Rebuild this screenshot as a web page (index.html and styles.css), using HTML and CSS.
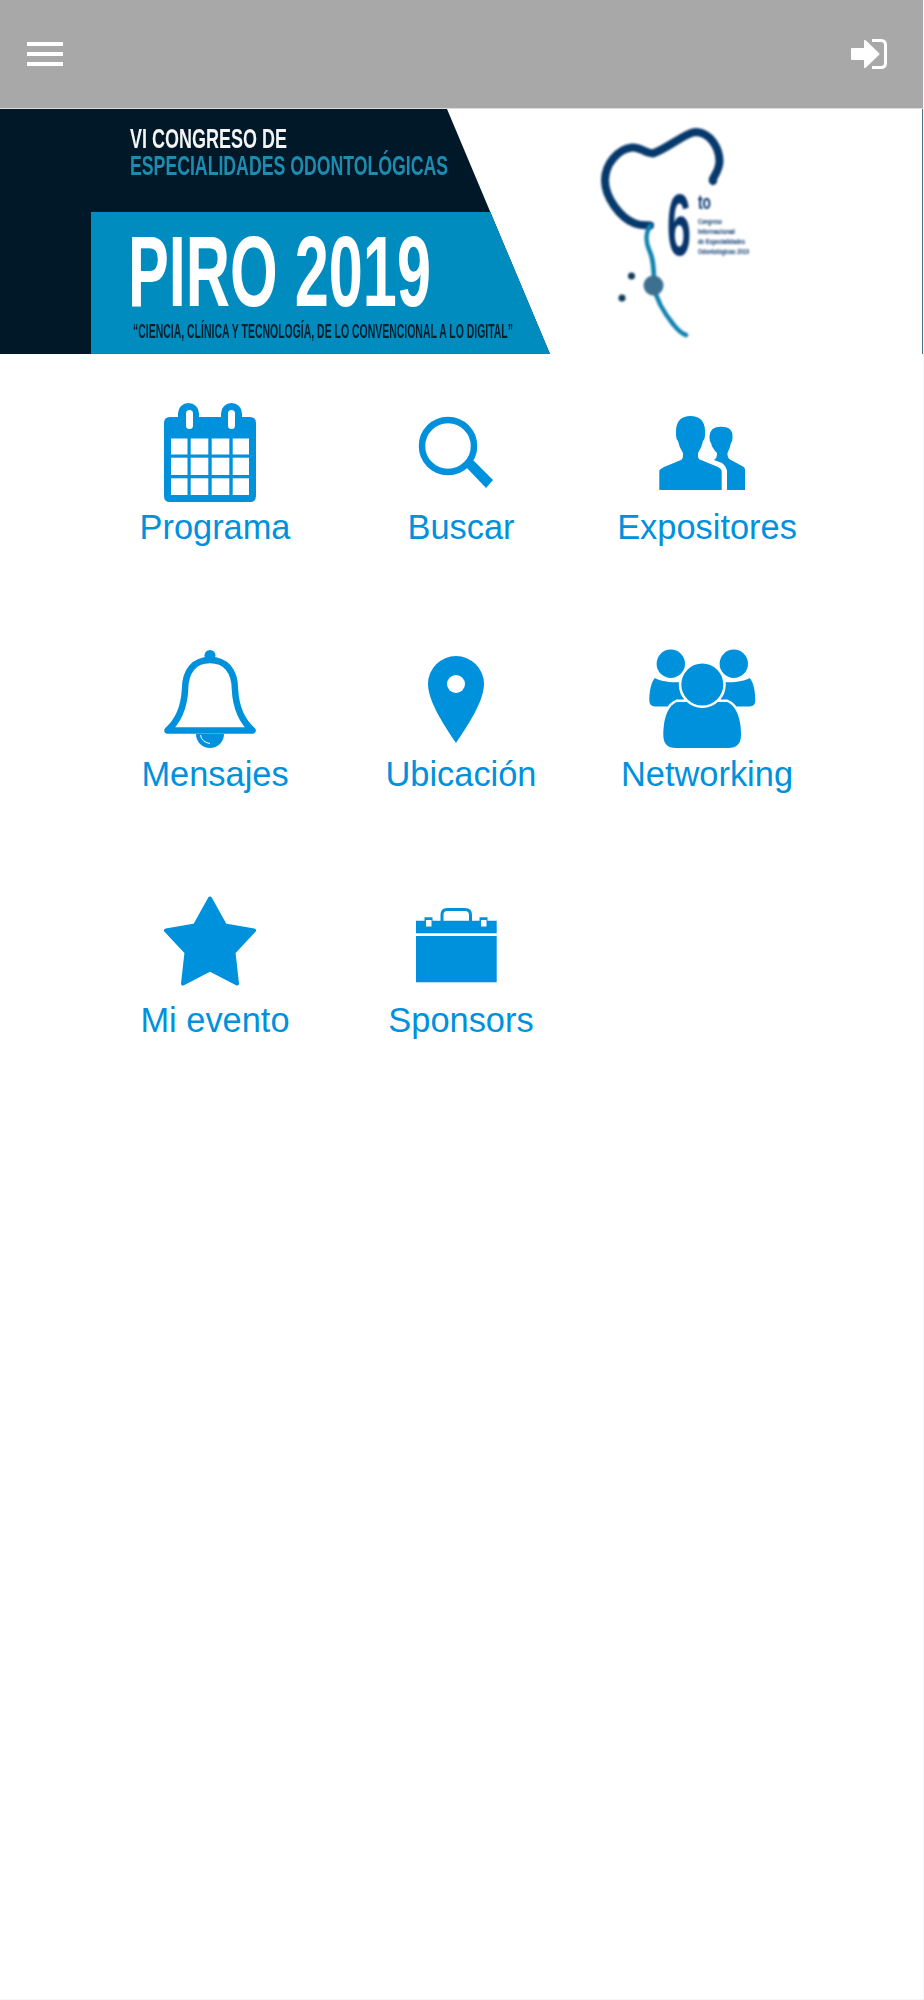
FILE: index.html
```html
<!DOCTYPE html>
<html lang="es">
<head>
<meta charset="UTF-8">
<meta name="viewport" content="width=device-width, initial-scale=1.0">
<title>PIRO 2019</title>
<link rel="stylesheet" href="styles.css">
</head>
<body>
<div class="app">
    <header class="topbar">
        <div class="burger"><span></span><span></span><span></span></div>
        <svg class="login" viewBox="0 0 36 30">
            <polygon class="login-arrow" points="1,10 14,10 14,2 27.5,15 14,28 14,20 1,20"/>
            <path class="login-door" d="M21 1.5H30Q34.5 1.5 34.5 6V24Q34.5 28.5 30 28.5H21"/>
        </svg>
    </header>

    <svg class="banner" viewBox="0 0 922 245">
        <rect class="b-white" width="922" height="245"/>
        <polygon class="b-dark" points="0,0 447,0 550,245 0,245"/>
        <polygon class="b-blue" points="91,103 490.300,103 550,245 91,245"/>
        <g class="b-soft">
            <text class="b-head" x="130" y="39" textLength="157" lengthAdjust="spacingAndGlyphs">VI CONGRESO DE</text>
            <text class="b-sub" x="130" y="66" textLength="318" lengthAdjust="spacingAndGlyphs">ESPECIALIDADES ODONTOLÓGICAS</text>
            <text class="b-title" x="128" y="197" textLength="303" lengthAdjust="spacingAndGlyphs">PIRO 2019</text>
            <text class="b-tag" x="133" y="229" textLength="380" lengthAdjust="spacingAndGlyphs">“CIENCIA, CLÍNICA Y TECNOLOGÍA, DE LO CONVENCIONAL A LO DIGITAL”</text>
        </g>
        <!-- tooth logo -->
        <g class="t-soft">
            <path class="t-top" d="M713 72C711 70 720 62 719.500 51.500C719 38 710 24 696.500 23C686 23 670 38 653 44.500C645 44 640 38 632 38.500C618 40 605 55 605 71.500C605 88 620 109 635 114.500C642 117 646 116 650 116.500"/>
            <path class="t-low" d="M650 117C645 125 646 135 650 143C654 152 654 165 654 177C656 190 665 205 673 215C677 220 680 224 686 226"/>
            <circle class="t-knot" cx="653.500" cy="176.500" r="10"/>
            <circle class="t-dot" cx="631.500" cy="167" r="3.500"/>
            <circle class="t-dot" cx="622" cy="189" r="3.500"/>
            <text class="t-six" transform="translate(667 146) scale(0.49 1)">6</text>
            <text class="t-to" x="698" y="100" textLength="13" lengthAdjust="spacingAndGlyphs">to</text>
            <text class="t-small" x="698" y="115" textLength="24" lengthAdjust="spacingAndGlyphs">Congreso</text>
            <text class="t-small" x="698" y="125" textLength="37" lengthAdjust="spacingAndGlyphs">Internacional</text>
            <text class="t-small" x="698" y="135" textLength="47" lengthAdjust="spacingAndGlyphs">de Especialidades</text>
            <text class="t-small" x="698" y="145" textLength="51" lengthAdjust="spacingAndGlyphs">Odontológicas 2019</text>
        </g>
    </svg>

    <main class="menu">
        <a class="item">
            <svg class="icon" viewBox="0 0 100 100">
                <path d="M18 14V10.500A10.500 10.500 0 0 1 39 10.500V14H61V10.500A10.500 10.500 0 0 1 82 10.500V14H90Q96 14 96 20V93Q96 99 90 99H10Q4 99 4 93V20Q4 14 10 14Z"/>
                <g class="cut">
                    <rect x="26" y="7" width="7" height="19" rx="3.500"/>
                    <rect x="68" y="7" width="7" height="19" rx="3.500"/>
                    <rect x="11" y="35.500" width="16.500" height="16"/><rect x="30.700" y="35.500" width="17.600" height="16"/><rect x="51.700" y="35.500" width="17.600" height="16"/><rect x="72.700" y="35.500" width="16.300" height="16"/>
                    <rect x="11" y="54.700" width="16.500" height="17.300"/><rect x="30.700" y="54.700" width="17.600" height="17.300"/><rect x="51.700" y="54.700" width="17.600" height="17.300"/><rect x="72.700" y="54.700" width="16.300" height="17.300"/>
                    <rect x="11" y="75.300" width="16.500" height="16.700"/><rect x="30.700" y="75.300" width="17.600" height="16.700"/><rect x="51.700" y="75.300" width="17.600" height="16.700"/><rect x="72.700" y="75.300" width="16.300" height="16.700"/>
                </g>
            </svg>
            <span class="label">Programa</span>
        </a>
        <a class="item">
            <svg class="icon" viewBox="0 0 100 100">
                <circle class="line" cx="42" cy="43" r="26" stroke-width="6.500"/>
                <path d="M60 64L67 57L87 77L80 85Z"/>
            </svg>
            <span class="label">Buscar</span>
        </a>
        <a class="item">
            <svg class="icon" viewBox="0 0 100 100">
                <path d="M75 87V69Q75 64 70 60L62 57Q65 55 65 52V50Q60 45 59 40Q57.500 38 57.500 35V33Q58 23.700 69 23.700Q80.500 23.700 80.500 33V35Q80.500 38 79 40Q78 45 75.500 50V52Q76 56 79 57L90 63Q93 64 93 67V87Z"/>
                <path d="M7.300 87V67.500Q8 66 12 64L29 57Q31 56 31 52V50Q27 44 26 38Q24 36 24 32V27Q25 13 38.500 13Q52 13 53 27V32Q53 36 51 38Q50 44 46 50V53Q46 56 49 57L66 64Q69.700 66 69.700 68V87Z"/>
            </svg>
            <span class="label">Expositores</span>
        </a>

        <a class="item">
            <svg class="icon" viewBox="0 0 100 100">
                <circle cx="50" cy="5.500" r="5.500"/>
                <path d="M36 84A14 14 0 0 0 64 84Z"/>
                <path class="glint" d="M40.500 85Q41.500 92 50 93.500"/>
                <path class="line" stroke-width="6.500" stroke-linejoin="round" d="M7.500 80.500C17 72 24 58 25 40C25 20 35 10 50 10C65 10 75 20 75 40C76 58 83 72 92.500 80.500Z"/>
            </svg>
            <span class="label">Mensajes</span>
        </a>
        <a class="item">
            <svg class="icon" viewBox="0 0 100 100">
                <path d="M50 93C40 78 22 52 22 34A28 28 0 0 1 78 34C78 52 60 78 50 93Z"/>
                <circle class="cut" cx="50" cy="34" r="9"/>
            </svg>
            <span class="label">Ubicación</span>
        </a>
        <a class="item">
            <svg class="icon" viewBox="0 0 100 100">
                <path d="M3 28C8 31 18 33 30 32L32 50Q22 52 19 56.500H3Q-2.700 56.500 -2.700 50C-2.700 42 -1 32 3 28Z"/>
                <path d="M97.600 28C92.600 31 82.600 33 70.600 32L68.600 50Q78.600 52 81.600 56.500H97.600Q103.300 56.500 103.300 50C103.300 42 101.600 32 97.600 28Z"/>
                <circle class="ring" cx="18.800" cy="13.700" r="14.200"/>
                <circle class="ring" cx="81.800" cy="13.700" r="14.200"/>
                <path class="ring" d="M25 52H75C85 56 89 70 89 85Q89 98 76 98H24Q11.300 98 11.300 85C11.300 70 15 56 25 52Z"/>
                <circle class="ring" cx="50.300" cy="34.500" r="21"/>
            </svg>
            <span class="label">Networking</span>
        </a>

        <a class="item">
            <svg class="icon" viewBox="0 0 100 100">
                <polygon class="star" points="50,2.500 65,29.500 94,34.500 73.500,56.500 77,87.500 50,73.500 23,87.500 26.500,56.500 6,34.500 35,29.500"/>
            </svg>
            <span class="label">Mi evento</span>
        </a>
        <a class="item">
            <svg class="icon" viewBox="0 0 100 100">
                <path class="line" stroke-width="3" d="M36 25V19Q36 13.500 41 13.500H59Q64.500 13.500 64.500 19V25"/>
                <path d="M18.500 21.300H26.500V24.700H73.500V21.300H81.500V24.700H90.700V37.300H10V24.700H18.500Z"/>
                <rect class="cut" x="20" y="24" width="5.500" height="6.500"/>
                <rect class="cut" x="75" y="24" width="5.500" height="6.500"/>
                <rect x="10" y="40" width="80.700" height="46.300"/>
            </svg>
            <span class="label">Sponsors</span>
        </a>
    </main>
</div>
</body>
</html>
```

FILE: styles.css
```css
body {
    margin: 0;
    padding: 0;
    background-color: #fff;
    font-family: "Liberation Sans", Arial, sans-serif;
}

.app {
    box-sizing: border-box;
    width: 924px;
    height: 2000px;
    border-right: 1px solid #f4f4f8;
    border-bottom: 1px solid #f4f4f8;
}

.topbar {
    box-sizing: border-box;
    height: 109px;
    padding: 0 36px 1px 27px;
    background-color: #a8a8a8;
    border-bottom: 1px solid #dcdcdc;
    display: flex;
    align-items: center;
    justify-content: space-between;
}

.burger {
    display: flex;
    flex-direction: column;
    gap: 6px;
}

.burger span {
    display: block;
    width: 36px;
    height: 4px;
    background-color: #fff;
}

.login {
    width: 36px;
    height: 30px;
}

.login-arrow {
    fill: #fff;
    stroke: #fff;
    stroke-width: 2;
    stroke-linejoin: round;
}

.login-door {
    fill: none;
    stroke: #fff;
    stroke-width: 3;
}

/* banner */
.banner {
    display: block;
    width: 922px;
    height: 245px;
    border-right: 1px solid #4f7186;
}

.b-white { fill: #fff; }
.b-dark { fill: #001827; }
.b-blue { fill: #008cbf; }
.b-soft { filter: blur(0.5px); }
.t-soft { filter: blur(0.8px); }
.b-head { font-size: 28px; font-weight: bold; fill: #f2f4f5; }
.b-sub { font-size: 28px; font-weight: bold; fill: #1c8db0; }
.b-title { font-size: 100px; font-weight: bold; fill: #fff; }
.b-tag { font-size: 20px; font-weight: bold; fill: #00202f; }

.t-top { fill: none; stroke: #06396c; stroke-width: 8; stroke-linecap: round; }
.t-low { fill: none; stroke: #0f82b0; stroke-width: 4.5; stroke-linecap: round; }
.t-knot { fill: #3d6f8e; }
.t-dot { fill: #123a5a; }
.t-six { font-size: 88px; font-weight: bold; fill: #06346b; }
.t-to { font-size: 20px; font-weight: bold; fill: #06346b; }
.t-small { font-size: 8px; font-weight: bold; fill: #06346b; }

/* icon menu */
.menu {
    display: grid;
    grid-template-columns: repeat(3, 246px);
    grid-auto-rows: 246.5px;
    padding-left: 92px;
}

.item {
    display: flex;
    flex-direction: column;
    align-items: center;
    padding-top: 49px;
    color: #0091dd;
}

.icon {
    display: block;
    width: 100px;
    height: 100px;
    margin-right: 10px;
    fill: #0091dd;
    overflow: visible;
}

.label {
    margin-top: 5px;
    font-size: 34.4px;
    line-height: 38px;
}

.cut { fill: #fff; }

.line {
    fill: none;
    stroke: #0091dd;
}

.glint {
    fill: none;
    stroke: #fff;
    stroke-width: 1;
}

.ring {
    stroke: #fff;
    stroke-width: 5;
    paint-order: stroke;
}

.star {
    stroke: #0091dd;
    stroke-width: 4;
    stroke-linejoin: round;
}
```
